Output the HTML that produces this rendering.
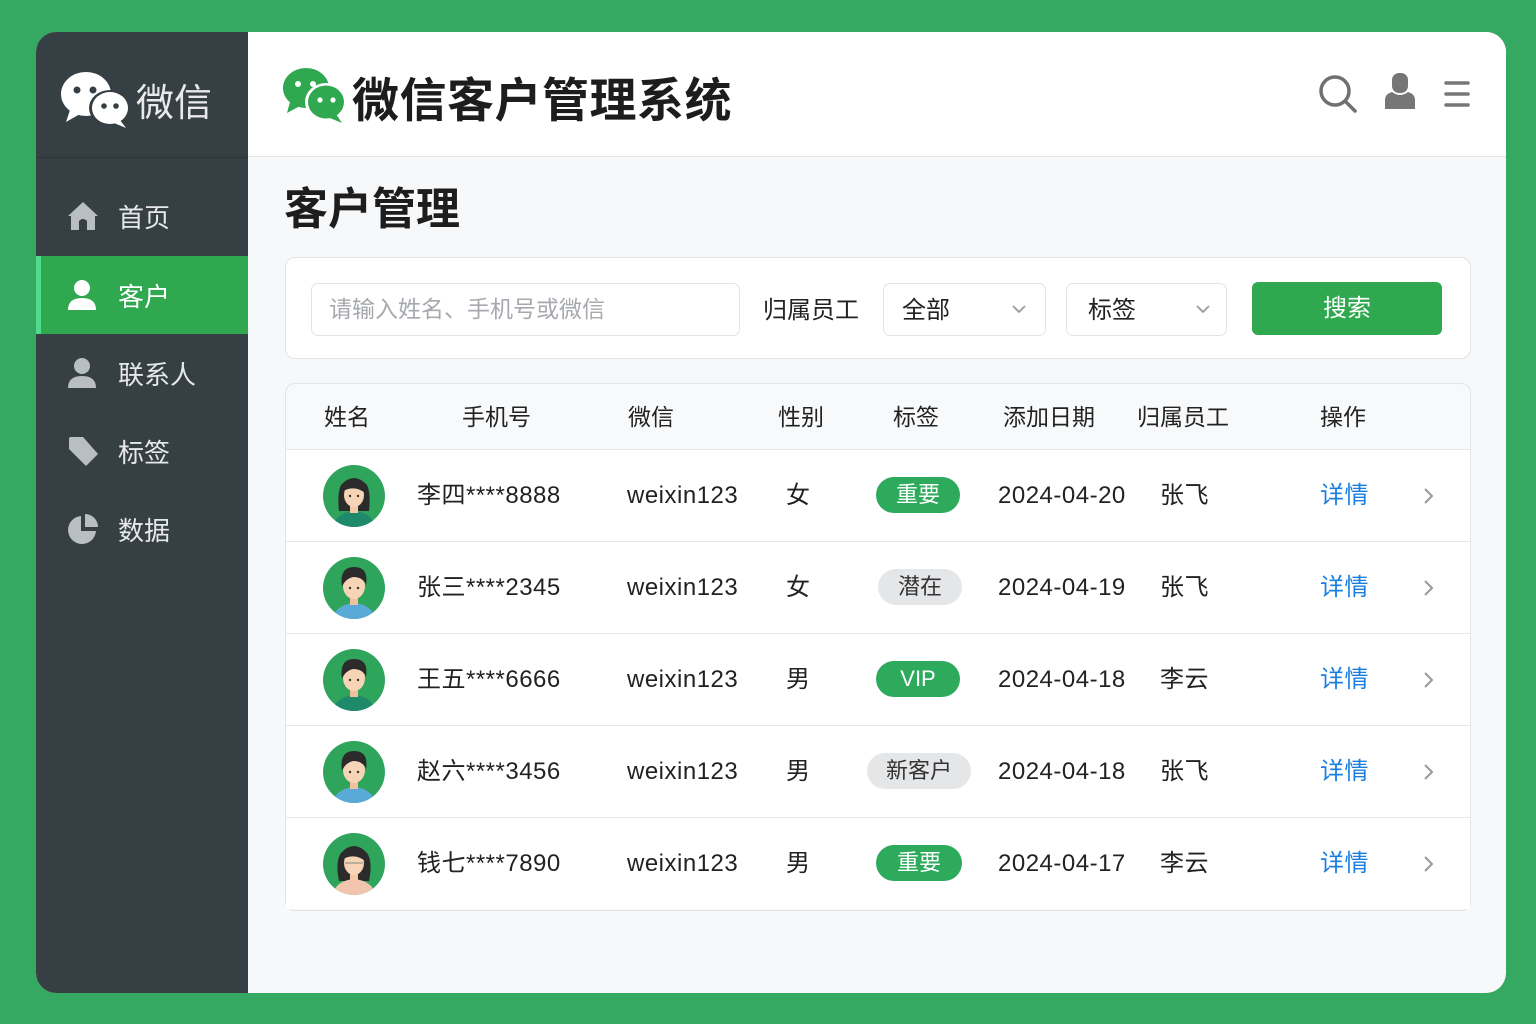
<!DOCTYPE html>
<html><head><meta charset="utf-8"><style>
*{margin:0;padding:0;box-sizing:border-box}
body{width:1536px;height:1024px;background:#35a862;font-family:"Liberation Sans","Noto Sans CJK SC",sans-serif;position:relative;overflow:hidden;color:#222}
.a{position:absolute}
.card{left:36px;top:32px;width:1470px;height:961px;border-radius:20px;overflow:hidden;background:#f7f8f9}
.side{left:0;top:0;width:212px;height:961px;background:#353f44}
.nav{left:0;width:212px;height:78px;color:#e6e8ea;font-size:26px;display:flex;align-items:center}
.nav svg{position:absolute;left:31px}
.nav span{position:absolute;left:82px}
.hdr{left:212px;top:0;width:1258px;height:125px;background:#fff;border-bottom:1px solid #e3e5e7}
.box{background:#fff;border:1px solid #e2e4e6;border-radius:10px}
.th{font-size:23px;color:#222;top:366px}
.row{left:250px;width:1184px;height:92px;border-top:1px solid #e4e6e8;background:#fff}
.t{position:absolute;top:0;line-height:92px;font-size:24px;color:#222;letter-spacing:0.5px}
.tag{position:absolute;top:27px;height:36px;border-radius:18px;font-size:22px;line-height:36px;text-align:center;color:#fff;background:#2eaa5c}
.tag.g{background:#e4e6e8;color:#333}
.lk{color:#1a7fe0}
</style></head><body>
<div class="a card">
 <div class="a side">
  <svg class="a" style="left:24px;top:38px" width="72" height="60" viewBox="0 0 72 60"><ellipse cx="26" cy="24" rx="25" ry="22" fill="#fff"/><path d="M10 40 L6 52 L20 44Z" fill="#fff"/><circle cx="17" cy="20" r="3.5" fill="#353f44"/><circle cx="33" cy="20" r="3.5" fill="#353f44"/><ellipse cx="50" cy="38" rx="21" ry="18" fill="#353f44"/><ellipse cx="50" cy="38" rx="18" ry="16" fill="#fff"/><path d="M60 50 L66 58 L54 53Z" fill="#fff"/><circle cx="44" cy="36" r="2.8" fill="#353f44"/><circle cx="56" cy="36" r="2.8" fill="#353f44"/></svg>
  <div class="a" style="left:100px;top:40px;font-size:38px;color:#e8eaeb">微信</div>
  <div class="a" style="left:0;top:125px;width:212px;height:1px;background:#2c3438"></div>
  <div class="a nav" style="top:145px"><svg width="32" height="30" viewBox="0 0 32 30"><path d="M16 1 L31 15 L28 15 L28 29 L20 29 L20 20 Q16 16 12 20 L12 29 L4 29 L4 15 L1 15Z" fill="#b9bec2"/></svg><span>首页</span></div>
  <div class="a nav" style="top:224px;background:#2fa84f"><div class="a" style="left:0;top:0;width:5px;height:78px;background:#4fdc8c"></div><svg width="30" height="32" viewBox="0 0 30 32"><circle cx="15" cy="9" r="8" fill="#fff"/><path d="M1 31 Q1 19 15 19 Q29 19 29 31Z" fill="#fff"/></svg><span style="color:#fff">客户</span></div>
  <div class="a nav" style="top:302px"><svg width="30" height="32" viewBox="0 0 30 32"><circle cx="15" cy="9" r="8" fill="#b9bec2"/><path d="M1 31 Q1 19 15 19 Q29 19 29 31Z" fill="#b9bec2"/></svg><span>联系人</span></div>
  <div class="a nav" style="top:380px"><svg width="32" height="32" viewBox="0 0 32 32"><path d="M2 4 Q2 2 4 2 L16 2 L31 19 L19 31 L2 14Z" fill="#b9bec2"/></svg><span>标签</span></div>
  <div class="a nav" style="top:458px"><svg width="32" height="32" viewBox="0 0 32 32"><path d="M14 3 A14 14 0 1 0 29 18 L14 18Z" fill="#b9bec2"/><path d="M18 1 L18 14 L31 14 A13 13 0 0 0 18 1Z" fill="#b9bec2"/></svg><span>数据</span></div>
 </div>
 <div class="a hdr">
  <svg class="a" style="left:34px;top:34px" width="64" height="58" viewBox="0 0 64 58"><ellipse cx="24" cy="22" rx="23" ry="20" fill="#2fa84f"/><path d="M8 36 L5 47 L18 40Z" fill="#2fa84f"/><circle cx="16" cy="18" r="3" fill="#fff"/><circle cx="31" cy="18" r="3" fill="#fff"/><ellipse cx="44" cy="36" rx="21" ry="19" fill="#fff"/><ellipse cx="44" cy="36" rx="18" ry="16.5" fill="#2fa84f"/><path d="M54 48 L60 57 L48 52Z" fill="#2fa84f"/><circle cx="38" cy="34" r="2.6" fill="#fff"/><circle cx="51" cy="34" r="2.6" fill="#fff"/></svg>
  <div class="a" style="left:104px;top:30px;font-size:47px;font-weight:bold;color:#1d1d1d;letter-spacing:0.5px">微信客户管理系统</div>
  <svg class="a" style="left:1070px;top:42px" width="40" height="40" viewBox="0 0 40 40"><circle cx="17" cy="17" r="14" fill="none" stroke="#707070" stroke-width="3.5"/><path d="M27 27 L37 37" stroke="#707070" stroke-width="3.5" stroke-linecap="round"/></svg>
  <svg class="a" style="left:1136px;top:40px" width="32" height="38" viewBox="0 0 32 38"><rect x="8" y="1" width="16" height="20" rx="7" fill="#767676"/><path d="M1 37 L1 28 Q1 22 8 20 Q16 26 24 20 Q31 22 31 28 L31 37Z" fill="#767676"/></svg>
  <svg class="a" style="left:1196px;top:48px" width="26" height="28" viewBox="0 0 26 28"><g stroke="#767676" stroke-width="3.5" stroke-linecap="round"><path d="M2 3H24M2 14H24M2 25H24"/></g></svg>
 </div>
 <div class="a" style="left:248px;top:141px;font-size:44px;font-weight:bold;color:#1d1d1d">客户管理</div>
 <div class="a box" style="left:249px;top:225px;width:1186px;height:102px"></div>
 <div class="a box" style="left:275px;top:251px;width:429px;height:53px;border-radius:7px"></div>
 <div class="a" style="left:293px;top:258px;font-size:23px;color:#a6a9ad">请输入姓名、手机号或微信</div>
 <div class="a" style="left:727px;top:258px;font-size:24px;color:#222">归属员工</div>
 <div class="a box" style="left:847px;top:251px;width:163px;height:53px;border-radius:7px"></div>
 <div class="a" style="left:866px;top:258px;font-size:24px">全部</div>
 <svg class="a" style="left:976px;top:272px" width="14" height="10" viewBox="0 0 14 10"><path d="M1 2 L7 8 L13 2" fill="none" stroke="#999" stroke-width="1.8"/></svg>
 <div class="a box" style="left:1030px;top:251px;width:161px;height:53px;border-radius:7px"></div>
 <div class="a" style="left:1052px;top:258px;font-size:24px">标签</div>
 <svg class="a" style="left:1160px;top:272px" width="14" height="10" viewBox="0 0 14 10"><path d="M1 2 L7 8 L13 2" fill="none" stroke="#999" stroke-width="1.8"/></svg>
 <div class="a" style="left:1216px;top:250px;width:190px;height:53px;border-radius:6px;background:#2fa84f;color:#fff;font-size:24px;line-height:53px;text-align:center">搜索</div>
 <div class="a box" style="left:249px;top:351px;width:1186px;height:528px;overflow:hidden;background:#f8f9fa"></div>
 <div class="a th" style="left:288px">姓名</div><div class="a th" style="left:426px">手机号</div><div class="a th" style="left:592px">微信</div><div class="a th" style="left:742px">性别</div><div class="a th" style="left:857px">标签</div><div class="a th" style="left:967px">添加日期</div><div class="a th" style="left:1101px">归属员工</div><div class="a th" style="left:1284px">操作</div>

 <div class="a row" style="top:417px">
  <svg class="a" style="left:37px;top:15px" width="62" height="62" viewBox="0 0 62 62"><defs><clipPath id="c1"><circle cx="31" cy="31" r="31"/></clipPath></defs><circle cx="31" cy="31" r="31" fill="#2ea55a"/><g clip-path="url(#c1)"><path d="M16 46 Q14 28 18 20 Q31 6 44 20 Q48 28 46 46Z" fill="#2b2b2b"/><path d="M10 62 Q12 48 31 46 Q50 48 52 62Z" fill="#1f8a6a"/><rect x="27" y="38" width="8" height="10" fill="#f3c9a8"/><ellipse cx="31" cy="30" rx="10" ry="12" fill="#f6d4b5"/><path d="M20 26 Q24 16 36 18 Q42 22 42 28 Q32 20 20 26Z" fill="#2b2b2b"/><circle cx="27" cy="31" r="1.2" fill="#333"/><circle cx="35" cy="31" r="1.2" fill="#333"/></g></svg>
  <div class="t" style="left:131px">李四****8888</div><div class="t" style="left:341px">weixin123</div><div class="t" style="left:500px">女</div>
  <div class="tag" style="left:590px;width:84px">重要</div>
  <div class="t" style="left:712px">2024-04-20</div><div class="t" style="left:874px">张飞</div><div class="t lk" style="left:1034px">详情</div>
  <svg class="a" style="left:1137px;top:37px" width="12" height="18" viewBox="0 0 12 18"><path d="M2 2 L9 9 L2 16" fill="none" stroke="#999" stroke-width="2"/></svg>
 </div>
 <div class="a row" style="top:509px">
  <svg class="a" style="left:37px;top:15px" width="62" height="62" viewBox="0 0 62 62"><defs><clipPath id="c2"><circle cx="31" cy="31" r="31"/></clipPath></defs><circle cx="31" cy="31" r="31" fill="#2ea55a"/><g clip-path="url(#c2)"><path d="M10 62 Q12 48 31 46 Q50 48 52 62Z" fill="#5aaad8"/><rect x="27" y="38" width="8" height="10" fill="#f0c19c"/><ellipse cx="31" cy="29" rx="11" ry="13" fill="#f6d4b5"/><path d="M19 30 Q16 10 31 10 Q46 10 43 28 Q40 20 30 20 Q22 22 19 30Z" fill="#2b2b2b"/><circle cx="27" cy="31" r="1.2" fill="#333"/><circle cx="35" cy="31" r="1.2" fill="#333"/></g></svg>
  <div class="t" style="left:131px">张三****2345</div><div class="t" style="left:341px">weixin123</div><div class="t" style="left:500px">女</div>
  <div class="tag g" style="left:592px;width:84px">潜在</div>
  <div class="t" style="left:712px">2024-04-19</div><div class="t" style="left:874px">张飞</div><div class="t lk" style="left:1034px">详情</div>
  <svg class="a" style="left:1137px;top:37px" width="12" height="18" viewBox="0 0 12 18"><path d="M2 2 L9 9 L2 16" fill="none" stroke="#999" stroke-width="2"/></svg>
 </div>
 <div class="a row" style="top:601px">
  <svg class="a" style="left:37px;top:15px" width="62" height="62" viewBox="0 0 62 62"><defs><clipPath id="c3"><circle cx="31" cy="31" r="31"/></clipPath></defs><circle cx="31" cy="31" r="31" fill="#2ea55a"/><g clip-path="url(#c3)"><path d="M10 62 Q12 48 31 46 Q50 48 52 62Z" fill="#1f8a6a"/><rect x="27" y="38" width="8" height="10" fill="#f0c19c"/><ellipse cx="31" cy="29" rx="11" ry="13" fill="#f6d4b5"/><path d="M19 30 Q16 10 31 10 Q46 10 43 28 Q40 20 30 20 Q22 22 19 30Z" fill="#2b2b2b"/><circle cx="27" cy="31" r="1.2" fill="#333"/><circle cx="35" cy="31" r="1.2" fill="#333"/></g></svg>
  <div class="t" style="left:131px">王五****6666</div><div class="t" style="left:341px">weixin123</div><div class="t" style="left:500px">男</div>
  <div class="tag" style="left:590px;width:84px">VIP</div>
  <div class="t" style="left:712px">2024-04-18</div><div class="t" style="left:874px">李云</div><div class="t lk" style="left:1034px">详情</div>
  <svg class="a" style="left:1137px;top:37px" width="12" height="18" viewBox="0 0 12 18"><path d="M2 2 L9 9 L2 16" fill="none" stroke="#999" stroke-width="2"/></svg>
 </div>
 <div class="a row" style="top:693px">
  <svg class="a" style="left:37px;top:15px" width="62" height="62" viewBox="0 0 62 62"><defs><clipPath id="c4"><circle cx="31" cy="31" r="31"/></clipPath></defs><circle cx="31" cy="31" r="31" fill="#2ea55a"/><g clip-path="url(#c4)"><path d="M10 62 Q12 48 31 46 Q50 48 52 62Z" fill="#5aaad8"/><rect x="27" y="38" width="8" height="10" fill="#f0c19c"/><ellipse cx="31" cy="29" rx="11" ry="13" fill="#f6d4b5"/><path d="M19 30 Q16 10 31 10 Q46 10 43 28 Q40 20 30 20 Q22 22 19 30Z" fill="#2b2b2b"/><circle cx="27" cy="31" r="1.2" fill="#333"/><circle cx="35" cy="31" r="1.2" fill="#333"/></g></svg>
  <div class="t" style="left:131px">赵六****3456</div><div class="t" style="left:341px">weixin123</div><div class="t" style="left:500px">男</div>
  <div class="tag g" style="left:581px;width:104px">新客户</div>
  <div class="t" style="left:712px">2024-04-18</div><div class="t" style="left:874px">张飞</div><div class="t lk" style="left:1034px">详情</div>
  <svg class="a" style="left:1137px;top:37px" width="12" height="18" viewBox="0 0 12 18"><path d="M2 2 L9 9 L2 16" fill="none" stroke="#999" stroke-width="2"/></svg>
 </div>
 <div class="a row" style="top:785px;height:92px">
  <svg class="a" style="left:37px;top:15px" width="62" height="62" viewBox="0 0 62 62"><defs><clipPath id="c5"><circle cx="31" cy="31" r="31"/></clipPath></defs><circle cx="31" cy="31" r="31" fill="#2ea55a"/><g clip-path="url(#c5)"><path d="M16 48 Q12 28 18 20 Q31 6 44 20 Q50 28 46 48Z" fill="#2b2b2b"/><path d="M10 62 Q12 48 31 46 Q50 48 52 62Z" fill="#f2c6ae"/><rect x="27" y="38" width="8" height="10" fill="#f3c9a8"/><ellipse cx="31" cy="30" rx="10" ry="12" fill="#f6d4b5"/><path d="M20 26 Q24 16 36 18 Q42 22 42 28 Q32 20 20 26Z" fill="#2b2b2b"/><path d="M22 30 H40" stroke="#888" stroke-width="1"/></g></svg>
  <div class="t" style="left:131px">钱七****7890</div><div class="t" style="left:341px">weixin123</div><div class="t" style="left:500px">男</div>
  <div class="tag" style="left:590px;width:86px">重要</div>
  <div class="t" style="left:712px">2024-04-17</div><div class="t" style="left:874px">李云</div><div class="t lk" style="left:1034px">详情</div>
  <svg class="a" style="left:1137px;top:37px" width="12" height="18" viewBox="0 0 12 18"><path d="M2 2 L9 9 L2 16" fill="none" stroke="#999" stroke-width="2"/></svg>
 </div>
</div>
</body></html>
